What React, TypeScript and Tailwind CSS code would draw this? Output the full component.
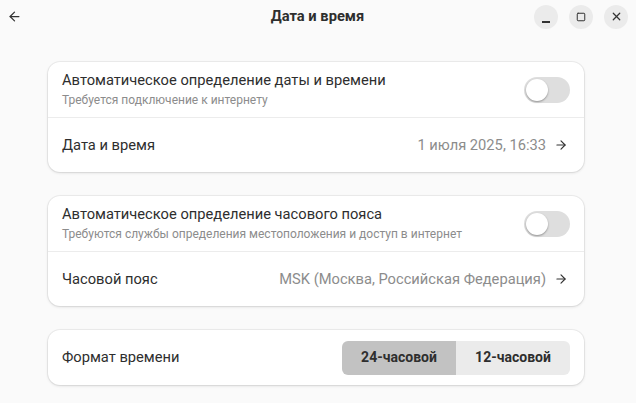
import { ArrowLeft, ArrowRight, Square, X } from "lucide-react"

function Toggle() {
  return (
    <div className="flex h-[26px] w-[46px] items-center rounded-full bg-[#dedede] px-[2px]">
      <div className="h-[22px] w-[22px] rounded-full bg-white shadow-[0_1px_2px_rgba(0,0,0,0.35)]" />
    </div>
  )
}

function SwitchRow({ title, subtitle }: { title: string; subtitle: string }) {
  return (
    <div className="flex h-[55px] items-center justify-between px-[14px]">
      <div className="flex flex-col">
        <span className="text-[14.7px] leading-[20px] text-[#2e2e2e]">{title}</span>
        <span className="text-[12px] leading-[20px] text-[#8c8c8c]">{subtitle}</span>
      </div>
      <Toggle />
    </div>
  )
}

function LinkRow({ title, value }: { title: string; value: string }) {
  return (
    <div className="flex h-[54px] items-center justify-between pl-[14px] pr-[16px]">
      <span className="text-[14.7px] text-[#2e2e2e]">{title}</span>
      <div className="flex items-center gap-[8px]">
        <span className="text-[14.7px] text-[#8c8c8c]">{value}</span>
        <ArrowRight className="h-[14px] w-[14px] text-[#333]" strokeWidth={2} />
      </div>
    </div>
  )
}

function Card({ children }: { children: React.ReactNode }) {
  return (
    <div className="overflow-hidden rounded-[12px] bg-white shadow-[0_0_0_1px_rgba(0,0,0,0.05),0_1px_3px_rgba(0,0,0,0.12)]">
      {children}
    </div>
  )
}

function WindowButton({ children }: { children: React.ReactNode }) {
  return (
    <div className="flex h-[24px] w-[24px] items-center justify-center rounded-full bg-[#ebebeb]">
      {children}
    </div>
  )
}

export default function App() {
  return (
    <div
      className="flex h-[403px] w-[636px] flex-col overflow-hidden bg-[#fafafa]"
      style={{ fontFamily: "Roboto, 'Noto Sans', sans-serif" }}
    >
      <header className="grid h-[33px] grid-cols-[1fr_auto_1fr] items-center pl-[7px] pr-[8px]">
        <ArrowLeft className="h-[15px] w-[15px] text-[#333]" strokeWidth={2} />
        <div className="text-[14.7px] font-bold text-[#2e2e2e]">Дата и время</div>
        <div className="flex items-center justify-end gap-[11px]">
          <div className="flex h-[24px] w-[24px] items-end justify-center rounded-full bg-[#ebebeb] pb-[6px]">
            <div className="h-[2px] w-[8px] bg-[#333]" />
          </div>
          <WindowButton>
            <Square className="h-[10px] w-[10px] text-[#333]" strokeWidth={2.4} />
          </WindowButton>
          <WindowButton>
            <X className="h-[13px] w-[13px] text-[#333]" strokeWidth={2.2} />
          </WindowButton>
        </div>
      </header>

      <main className="flex flex-col gap-[24px] pl-[48px] pr-[52px] pt-[29px]">
        <Card>
          <SwitchRow
            title="Автоматическое определение даты и времени"
            subtitle="Требуется подключение к интернету"
          />
          <div className="h-px bg-[#ececec]" />
          <LinkRow title="Дата и время" value="1 июля 2025, 16:33" />
        </Card>

        <Card>
          <SwitchRow
            title="Автоматическое определение часового пояса"
            subtitle="Требуются службы определения местоположения и доступ в интернет"
          />
          <div className="h-px bg-[#ececec]" />
          <LinkRow title="Часовой пояс" value="MSK (Москва, Российская Федерация)" />
        </Card>

        <Card>
          <div className="flex h-[55px] items-center justify-between px-[14px]">
            <span className="text-[14.7px] text-[#2e2e2e]">Формат времени</span>
            <div className="flex h-[34px] overflow-hidden rounded-[6px] text-[14px] font-bold text-[#2e2e2e]">
              <div className="flex w-[114px] items-center justify-center bg-[#c2c2c2]">24-часовой</div>
              <div className="flex w-[114px] items-center justify-center bg-[#ebebeb]">12-часовой</div>
            </div>
          </div>
        </Card>
      </main>
    </div>
  )
}
